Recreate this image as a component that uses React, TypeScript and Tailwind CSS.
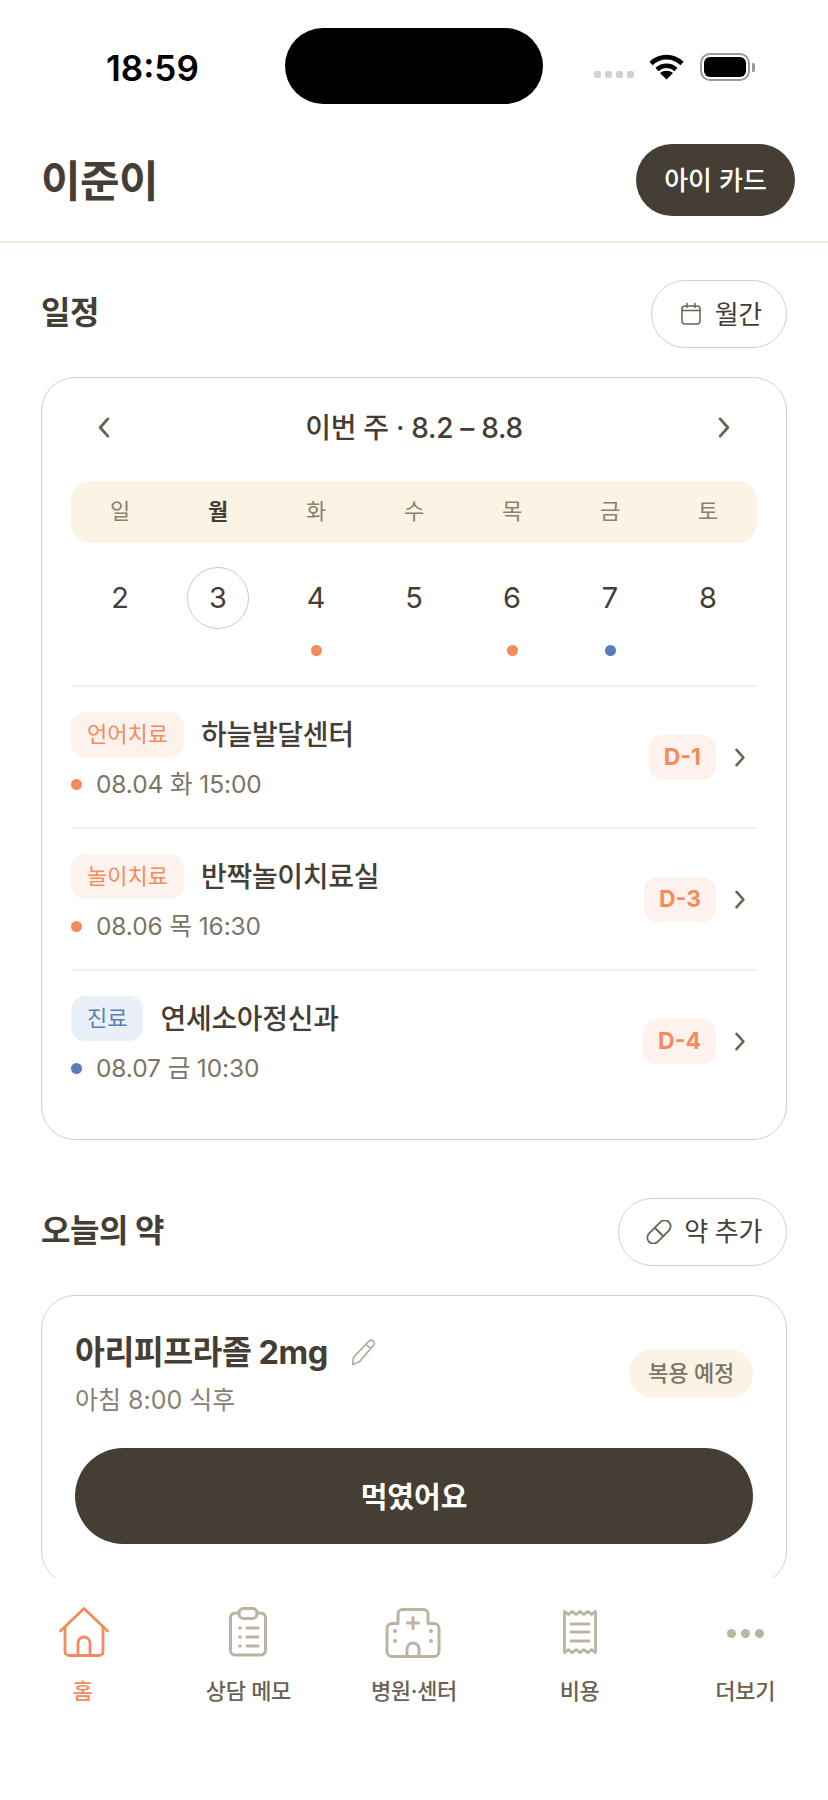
import { ReactNode } from 'react';

const FONT = 'font-[Inter,"Noto_Sans_CJK_KR",sans-serif]';

const weekdays = ['일', '월', '화', '수', '목', '금', '토'];
const dates = [
  { day: 2 },
  { day: 3, today: true },
  { day: 4, dot: 'bg-[#f58a5c]' },
  { day: 5 },
  { day: 6, dot: 'bg-[#f58a5c]' },
  { day: 7, dot: 'bg-[#5a7fb8]' },
  { day: 8 },
];

const schedule = [
  { tag: '언어치료', name: '하늘발달센터', when: '08.04 화 15:00', dday: 'D-1', blue: false },
  { tag: '놀이치료', name: '반짝놀이치료실', when: '08.06 목 16:30', dday: 'D-3', blue: false },
  { tag: '진료', name: '연세소아정신과', when: '08.07 금 10:30', dday: 'D-4', blue: true },
];

function Chevron({ dir = 'right', className }: { dir?: 'left' | 'right'; className: string }) {
  return (
    <svg viewBox="0 0 14 22" className={className} fill="none" stroke="#6b6254" strokeWidth="3" strokeLinecap="round" strokeLinejoin="round">
      <path d={dir === 'right' ? 'M3 2l8 9-8 9' : 'M11 2l-8 9 8 9'} />
    </svg>
  );
}

function StatusBar() {
  return (
    <div className="flex items-start pt-[28px] pl-[106px]">
      <div className="w-[179px] pt-[19px] font-['Inter'] text-[35px] leading-[42px] font-semibold text-black">18:59</div>
      <div className="h-[76px] w-[258px] rounded-[38px] bg-black" />
      <div className="ml-[51px] flex items-center pt-[25px]">
        <div className="mt-[15px] flex gap-[4px]">
          {[0, 1, 2, 3].map((i) => (
            <div key={i} className="h-[7px] w-[7px] rounded-[2px] bg-[#d1d1d1]" />
          ))}
        </div>
        <svg viewBox="0 0 35 26" className="ml-[15px] h-[26px] w-[35px]" fill="none" stroke="#000" strokeWidth="4.6">
          <path d="M2 9.5c9-8.5 22-8.5 31 0" />
          <path d="M8 15.5c5.500-5 13.500-5 19 0" />
          <path d="M17.500 25.500l-6.500-6.500c3.800-3 9.200-3 13 0z" fill="#000" stroke="none" />
        </svg>
        <div className="ml-[16px] flex items-center">
          <div className="flex h-[28px] w-[50px] items-center justify-center rounded-[10px] border-2 border-[#9a9a9a]">
            <div className="h-[20px] w-[42px] rounded-[6px] bg-black" />
          </div>
          <div className="ml-[2px] h-[9px] w-[3px] rounded-r-[2px] bg-[#9a9a9a]" />
        </div>
      </div>
    </div>
  );
}

function SectionHead({ title, icon, label }: { title: string; icon: ReactNode; label: string }) {
  return (
    <div className="flex items-center justify-between">
      <h2 className="-mt-[2px] text-[32px] leading-[40px] font-bold tracking-[-0.5px] text-[#453e34]">{title}</h2>
      <button className="flex h-[68px] items-center gap-[14px] rounded-full border-[1.5px] border-[#d6d0c5] bg-white pr-[24px] pl-[30px] text-[26px] tracking-[-0.3px] text-[#453e34]">
        {icon}
        {label}
      </button>
    </div>
  );
}

function Calendar() {
  return (
    <div className="rounded-[34px] border-[1.5px] border-[#d6d0c5] px-[29px] pt-[27px] pb-[28px]">
      <div className="flex h-[44px] items-center justify-between px-[26px]">
        <Chevron dir="left" className="h-[21px] w-[14px]" />
        <div className="pt-[2px] text-[28px] font-medium tracking-[-0.3px] text-[#453e34]">이번 주 · 8.2 – 8.8</div>
        <Chevron className="h-[21px] w-[14px]" />
      </div>
      <div className="mt-[31.5px] grid h-[62px] grid-cols-7 items-center rounded-[20px] bg-[#fbf3e4] text-center text-[22px]">
        {weekdays.map((d) => (
          <div key={d} className={d === '월' ? 'font-bold text-[#453e34]' : 'text-[#8a8072]'}>
            {d}
          </div>
        ))}
      </div>
      <div className="mt-[24px] grid grid-cols-7">
        {dates.map((d) => (
          <div key={d.day} className="flex flex-col items-center">
            <div className={`flex h-[62px] w-[62px] items-center justify-center rounded-full pt-[1px] text-[29px] text-[#453e34] ${d.today ? 'border-[1.5px] border-[#cfc8bb]' : ''}`}>
              {d.day}
            </div>
            <div className={`mt-[16.5px] h-[11px] w-[11px] rounded-full ${d.dot ?? ''}`} />
          </div>
        ))}
      </div>
      <div className="mt-[28.5px]">
        {schedule.map((s) => (
          <div key={s.name} className="flex items-center justify-between border-t-2 border-[#f6f2ec] py-[25px]">
            <div>
              <div className="flex h-[45px] items-center gap-[17px]">
                <span className={`flex h-[45px] items-center rounded-[14px] px-[16px] text-[22px] ${s.blue ? 'bg-[#e9f0f8] text-[#5a7fb8]' : 'bg-[#fef2ec] text-[#f58a5c]'}`}>
                  {s.tag}
                </span>
                <span className="pt-[2px] text-[28px] font-medium tracking-[-0.3px] text-[#453e34]">{s.name}</span>
              </div>
              <div className="mt-[11px] flex h-[34px] items-center gap-[14px]">
                <span className={`h-[11px] w-[11px] rounded-full ${s.blue ? 'bg-[#5a7fb8]' : 'bg-[#f58a5c]'}`} />
                <span className="text-[24.5px] tracking-[-0.1px] text-[#7d7366]">{s.when}</span>
              </div>
            </div>
            <div className="mt-[1px] flex items-center gap-[18px] pr-[11px]">
              <span className="flex h-[45px] items-center rounded-[14px] bg-[#fef2ec] px-[15px] text-[23px] font-bold text-[#f58a5c]">{s.dday}</span>
              <Chevron className="h-[19px] w-[12px]" />
            </div>
          </div>
        ))}
      </div>
    </div>
  );
}

function Medicine() {
  return (
    <div className="rounded-[34px] border-[1.5px] border-[#d6d0c5] px-[33px] pt-[34.5px] pb-[40px]">
      <div className="flex items-center justify-between">
        <div>
          <div className="flex h-[44px] items-center gap-[22px]">
            <span className="pt-[2px] text-[32.5px] font-bold tracking-[-0.5px] text-[#453e34]">아리피프라졸 2mg</span>
            <svg viewBox="0 0 26 26" className="h-[27px] w-[27px]" fill="none" stroke="#b5ab9b" strokeWidth="1.600" strokeLinejoin="round">
              <path d="M18.500 1.800a3 3 0 0 1 4.500 3.800L9 22l-6.500 2.500L3.500 17.500z" />
              <path d="M15.500 5.500l5 4" />
            </svg>
          </div>
          <div className="mt-[9px] h-[34px] text-[25px] leading-[34px] text-[#8a8072]">아침 8:00 식후</div>
        </div>
        <span className="flex h-[49px] items-center rounded-full bg-[#fbf3e4] px-[19px] text-[22px] font-medium tracking-[-0.2px] text-[#7d7366]">복용 예정</span>
      </div>
      <button className="mt-[31px] h-[96px] w-full rounded-full bg-[#453e34] pt-[4px] text-[29px] font-bold text-white">먹였어요</button>
    </div>
  );
}

function HomeIcon() {
  return (
    <svg viewBox="0 0 50 50" className="ml-[2px] h-[50px] w-[50px]" fill="none" stroke="#f58a5c" strokeWidth="2.800" strokeLinecap="round" strokeLinejoin="round">
      <path d="M1.500 24L25 1.500 48.500 24" />
      <path d="M6 19.500V44.500a4 4 0 0 0 4 4h30a4 4 0 0 0 4-4V19.500" />
      <path d="M19 48.500V36a6 6 0 0 1 12 0v12.500" />
    </svg>
  );
}

function MemoIcon() {
  return (
    <svg viewBox="0 0 38 50" className="h-[50px] w-[38px]" fill="none" stroke="#bdb3a3" strokeWidth="3" strokeLinecap="round" strokeLinejoin="round">
      <path d="M10 6H6a4.500 4.500 0 0 0-4.500 4.500v33A4.500 4.500 0 0 0 6 48h26a4.500 4.500 0 0 0 4.500-4.500v-33A4.500 4.500 0 0 0 32 6h-4" />
      <rect x="10" y="1.500" width="18" height="10" rx="4.500" />
      <path d="M18 21h11M18 30h11M18 39h11" />
      <path d="M11 21h.01M11 30h.01M11 39h.01" strokeWidth="3.600" />
    </svg>
  );
}

function HospitalIcon() {
  return (
    <svg viewBox="0 0 56 50" className="mt-[2px] -ml-[2px] h-[50px] w-[56px]" fill="none" stroke="#bdb3a3" strokeWidth="3" strokeLinecap="round" strokeLinejoin="round">
      <path d="M22 48.500H7a5 5 0 0 1-5-5v-23a5 5 0 0 1 5-5h6V6a4.500 4.500 0 0 1 4.500-4.500h21A4.500 4.500 0 0 1 43 6v9.500h6a5 5 0 0 1 5 5v23a5 5 0 0 1-5 5H34" />
      <path d="M22 48.500V41a6 6 0 0 1 12 0v7.500z" />
      <path d="M28 9.500v11M22.500 15h11" />
      <path d="M10 23h.01M10 33h.01M46 23h.01M46 33h.01" strokeWidth="4" />
    </svg>
  );
}

function ReceiptIcon() {
  return (
    <svg viewBox="0 0 34 44" className="h-[44px] w-[34px]" fill="none" stroke="#bdb3a3" strokeWidth="2.800" strokeLinejoin="round">
      <path d="M1.500 1.500l3.900 2.800 3.900-2.800 3.900 2.800 3.800-2.800 3.800 2.800 3.900-2.800 3.900 2.800 3.900-2.800v41l-3.900-2.800-3.900 2.800-3.900-2.800-3.800 2.800-3.800-2.800-3.900 2.800-3.900-2.800-3.900 2.800z" />
      <path d="M8 14h18M8 22h18M8 31h18" strokeLinecap="round" />
    </svg>
  );
}

function MoreIcon() {
  return (
    <div className="mt-[2px] flex gap-[5px]">
      {[0, 1, 2].map((i) => (
        <div key={i} className="h-[9px] w-[9px] rounded-full bg-[#bdb3a3]" />
      ))}
    </div>
  );
}

const tabs = [
  { label: '홈', icon: <HomeIcon />, active: true },
  { label: '상담 메모', icon: <MemoIcon /> },
  { label: '병원·센터', icon: <HospitalIcon /> },
  { label: '비용', icon: <ReceiptIcon /> },
  { label: '더보기', icon: <MoreIcon /> },
];

export default function App() {
  return (
    <div className={`flex h-[1800px] w-[828px] flex-col overflow-hidden bg-white ${FONT}`}>
      <StatusBar />
      <header className="flex items-center justify-between border-b-2 border-[#f0e8dc] pt-[40px] pr-[33px] pb-[25px] pl-[41px]">
        <h1 className="mt-[2px] text-[43px] font-bold tracking-[-0.5px] text-[#453e34]">이준이</h1>
        <button className="h-[72px] w-[159px] rounded-full bg-[#453e34] text-[26px] font-medium text-white">아이 카드</button>
      </header>
      <main className="flex-1 overflow-hidden px-[41px] pt-[37px]">
        <SectionHead
          title="일정"
          label="월간"
          icon={
            <svg viewBox="0 0 20 24" className="-ml-[1px] h-[24px] w-[20px]" fill="none" stroke="#6b6254" strokeWidth="1.500" strokeLinecap="round" strokeLinejoin="round">
              <rect x="1" y="4" width="18" height="18" rx="3" />
              <path d="M6 1.500v4M14 1.500v4M1 8.500h18" />
            </svg>
          }
        />
        <div className="mt-[29px]">
          <Calendar />
        </div>
        <div className="mt-[58px]">
          <SectionHead
            title="오늘의 약"
            label="약 추가"
            icon={
              <svg viewBox="0 0 26 24" className="-mr-[2px] -ml-[3px] h-[24px] w-[26px]" fill="none" stroke="#6b6254" strokeWidth="1.800" strokeLinecap="round" strokeLinejoin="round">
                <rect x="-1" y="6" width="28" height="12" rx="6" transform="rotate(-45 13 12)" />
                <path d="M8.760 7.760l8.480 8.480" />
              </svg>
            }
          />
        </div>
        <div className="mt-[29px]">
          <Medicine />
        </div>
      </main>
      <nav className="grid h-[222px] grid-cols-5 bg-white">
        {tabs.map((t) => (
          <div key={t.label} className="flex flex-col items-center pt-[26px]">
            <div className="flex h-[56px] items-center justify-center">{t.icon}</div>
            <div className={`mt-[16px] text-[22px] leading-[30px] font-medium tracking-[-0.3px] ${t.active ? 'text-[#f58a5c]' : 'text-[#6b6254]'}`}>{t.label}</div>
          </div>
        ))}
      </nav>
    </div>
  );
}
